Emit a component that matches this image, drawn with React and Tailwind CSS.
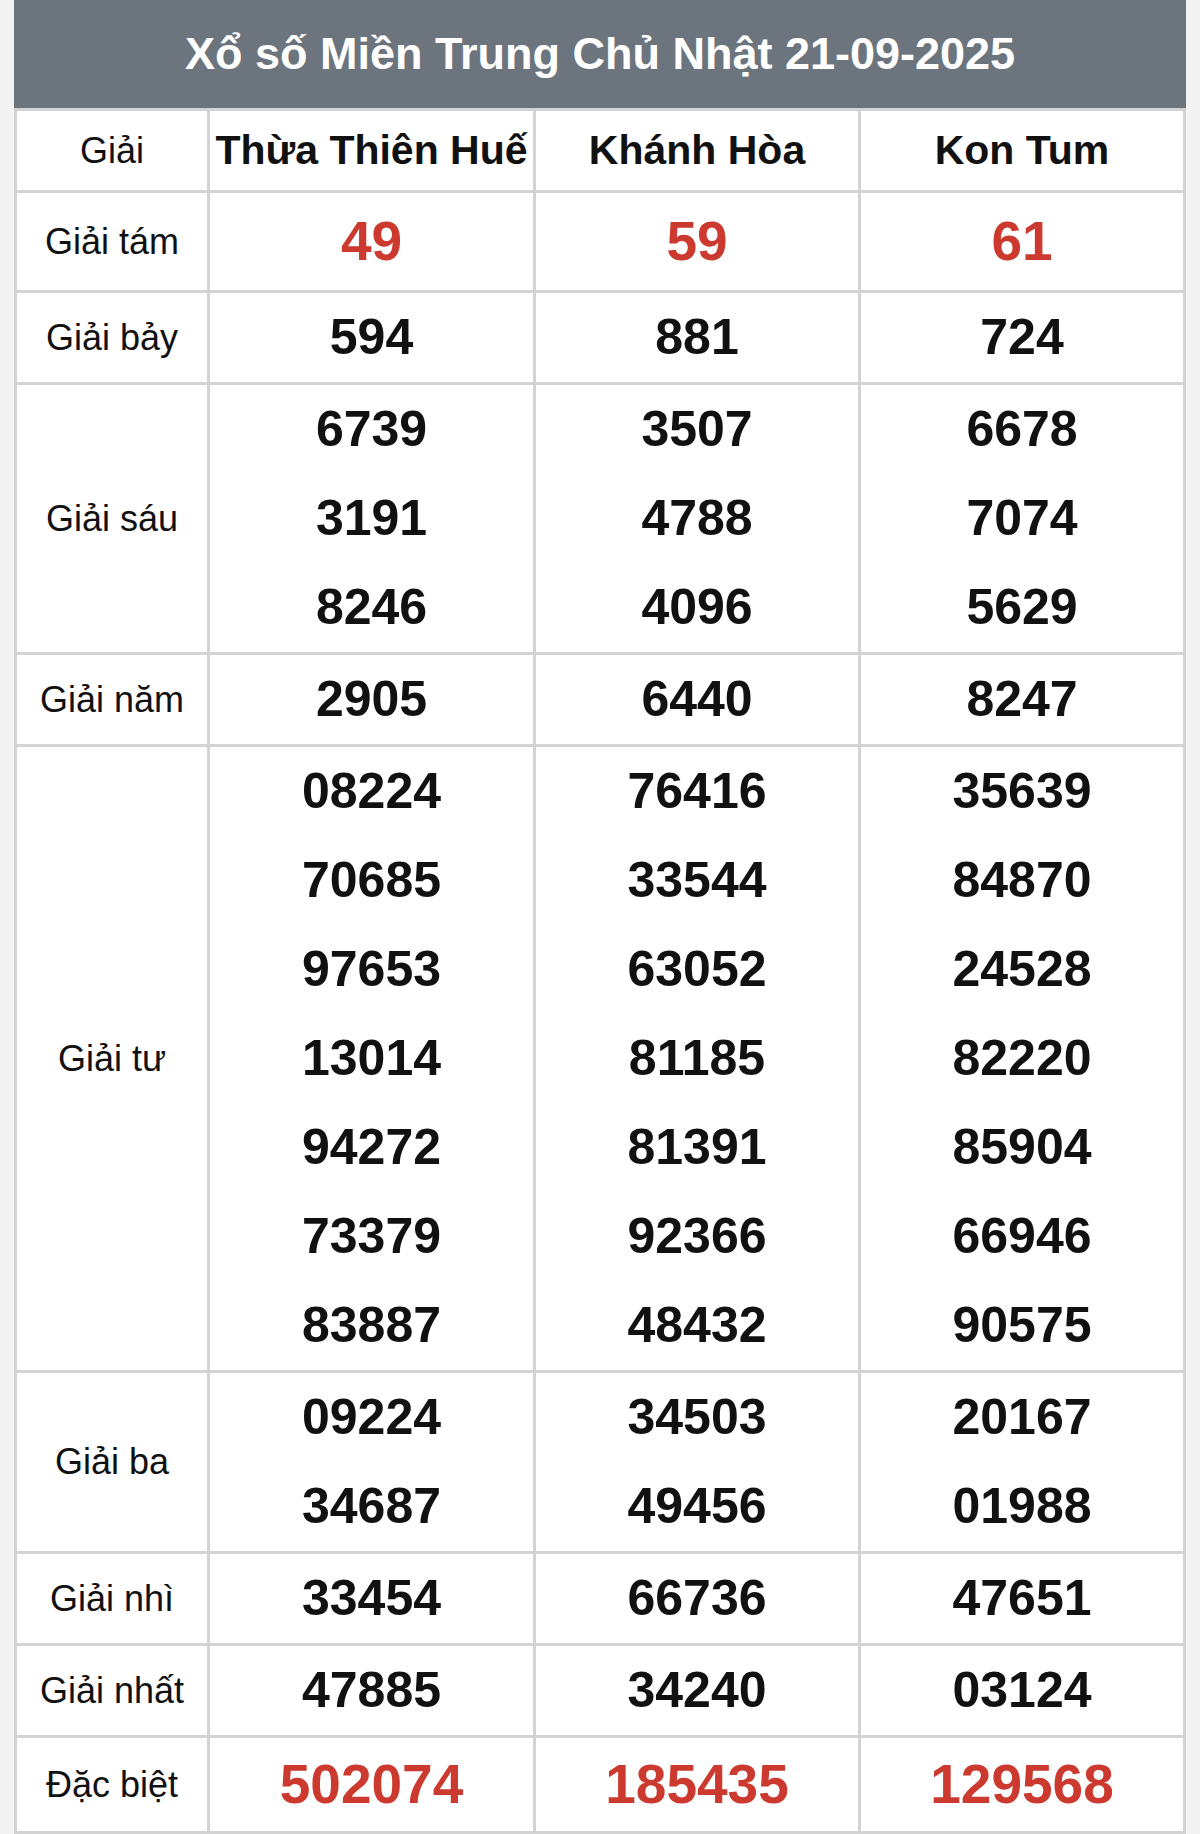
import React from "react";

const provinces = ["Thừa Thiên Huế", "Khánh Hòa", "Kon Tum"];

const rows = [
  { label: "Giải tám", big: true, h: "h-[97px]", data: [["49"], ["59"], ["61"]] },
  { label: "Giải bảy", data: [["594"], ["881"], ["724"]] },
  {
    label: "Giải sáu",
    data: [
      ["6739", "3191", "8246"],
      ["3507", "4788", "4096"],
      ["6678", "7074", "5629"],
    ],
  },
  { label: "Giải năm", data: [["2905"], ["6440"], ["8247"]] },
  {
    label: "Giải tư",
    data: [
      ["08224", "70685", "97653", "13014", "94272", "73379", "83887"],
      ["76416", "33544", "63052", "81185", "81391", "92366", "48432"],
      ["35639", "84870", "24528", "82220", "85904", "66946", "90575"],
    ],
  },
  {
    label: "Giải ba",
    data: [
      ["09224", "34687"],
      ["34503", "49456"],
      ["20167", "01988"],
    ],
  },
  { label: "Giải nhì", data: [["33454"], ["66736"], ["47651"]] },
  { label: "Giải nhất", data: [["47885"], ["34240"], ["03124"]] },
  { label: "Đặc biệt", big: true, h: "h-[93px]", data: [["502074"], ["185435"], ["129568"]] },
];

const App = () => {
  return (
    <div className="min-h-screen w-full bg-[#f3f3f3] font-['Liberation_Sans',Arial,sans-serif]">
      <div className="w-[1172px] mx-auto">
        <div className="h-[108px] bg-[#6c757d] text-white text-[45px] font-bold flex items-center justify-center">
          Xổ số Miền Trung Chủ Nhật 21-09-2025
        </div>
        <div className="grid grid-cols-[190px_323px_322px_322px] gap-[3px] p-[3px] bg-[#d3d3d3] border-b-[2px] border-[#bfb1aa]">
          <div className="h-[79px] bg-white flex items-center justify-center text-[36px] text-[#111]">
            Giải
          </div>
          {provinces.map((p) => (
            <div
              key={p}
              className="h-[79px] bg-white flex items-center justify-center text-[41px] font-bold text-[#111] whitespace-nowrap"
            >
              {p}
            </div>
          ))}

          {rows.map((row) => (
            <React.Fragment key={row.label}>
              <div className="bg-white flex items-center justify-center text-[36px] text-[#111]">
                {row.label}
              </div>
              {row.data.map((nums, i) => (
                <div key={i} className="bg-white flex flex-col items-center justify-center">
                  {nums.map((n, j) =>
                    row.big ? (
                      <div
                        key={j}
                        className={`${row.h} flex items-center justify-center text-[55px] font-bold text-[#cc3a2f]`}
                      >
                        {n}
                      </div>
                    ) : (
                      <div
                        key={j}
                        className="h-[89px] flex items-center justify-center text-[50px] font-bold text-[#111]"
                      >
                        {n}
                      </div>
                    )
                  )}
                </div>
              ))}
            </React.Fragment>
          ))}
        </div>
      </div>
    </div>
  );
};

export default App;
